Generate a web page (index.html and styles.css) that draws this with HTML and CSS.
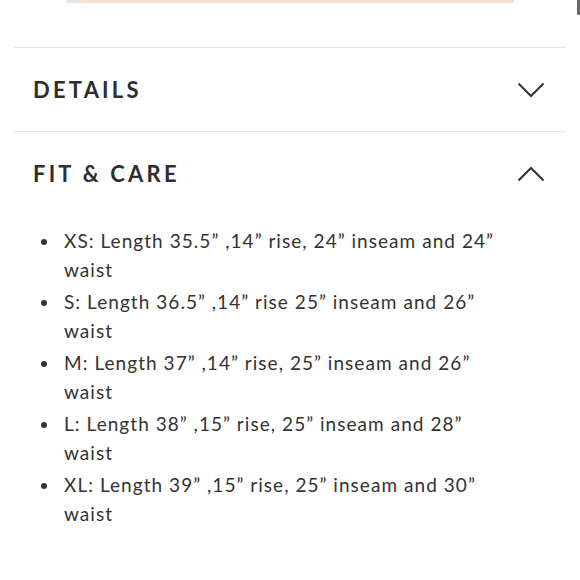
FILE: index.html
```html
<!DOCTYPE html>
<html>
<head>
<meta charset="utf-8">
<link rel="stylesheet" href="styles.css">
</head>
<body>
<div class="scroll-thumb"></div>
<div class="page">
  <div class="top-bar"></div>
  <div class="spacer"></div>
  <div class="section">
    <div class="section-head">
      <span class="title">DETAILS</span>
      <svg class="chev" width="28" height="16" viewBox="0 0 28 16"><path d="M1.5 1.5 L14 14 L26.5 1.5" fill="none" stroke="#333" stroke-width="2"/></svg>
    </div>
  </div>
  <div class="section open">
    <div class="section-head">
      <span class="title">FIT &amp; CARE</span>
      <svg class="chev" width="28" height="16" viewBox="0 0 28 16"><path d="M1.5 14.5 L14 2 L26.5 14.5" fill="none" stroke="#333" stroke-width="2"/></svg>
    </div>
    <ul class="sizes">
      <li>XS: Length 35.5” ,14” rise, 24” inseam and 24” waist</li>
      <li>S: Length 36.5” ,14” rise 25” inseam and 26” waist</li>
      <li>M: Length 37” ,14” rise, 25” inseam and 26” waist</li>
      <li>L: Length 38” ,15” rise, 25” inseam and 28” waist</li>
      <li>XL: Length 39” ,15” rise, 25” inseam and 30” waist</li>
    </ul>
  </div>
</div>
</body>
</html>
```
FILE: styles.css
```css
html, body {
  margin: 0;
  padding: 0;
  background: #fff;
}
body {
  font-family: Lato, "Open Sans", sans-serif;
  color: #333;
  width: 580px;
  height: 580px;
  overflow: hidden;
  position: relative;
}
.scroll-thumb {
  position: absolute;
  top: 0;
  right: 0;
  width: 3px;
  height: 15px;
  background: #666;
  border-radius: 0 0 2px 2px;
}
.page {
  padding: 0 14px;
}
.top-bar {
  height: 3px;
  margin: 0 52px;
  background: #f0e4da;
}
.spacer {
  height: 44px;
}
.section {
  border-top: 1px solid #e3e3e3;
}
.section-head {
  height: 83px;
  display: flex;
  align-items: center;
  justify-content: space-between;
  padding: 0 21px 0 19px;
}
.title {
  font-size: 22px;
  font-weight: 700;
  letter-spacing: 3.2px;
  color: #2e2e2e;
}
.chev {
  display: block;
}
.sizes {
  margin: 0;
  padding: 12px 61px 0 50px;
  list-style: none;
  font-size: 19px;
  line-height: 28.6px;
  letter-spacing: 1.05px;
  color: #333;
}
.sizes li {
  position: relative;
  margin-bottom: 3.9px;
}
.sizes li::before {
  content: "";
  position: absolute;
  left: -23px;
  top: 12px;
  width: 6px;
  height: 6px;
  border-radius: 50%;
  background: #333;
}
```
